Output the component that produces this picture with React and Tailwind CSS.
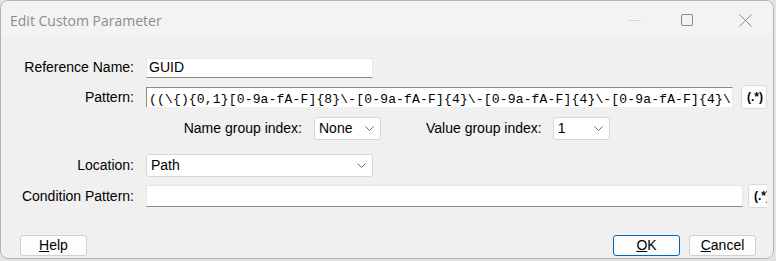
import React from "react";

const PATTERN =
  "((\\{){0,1}[0-9a-fA-F]{8}\\-[0-9a-fA-F]{4}\\-[0-9a-fA-F]{4}\\-[0-9a-fA-F]{4}\\-[0-9a-fA-F]{12}(\\}){0,1})";

function Chevron() {
  return (
    <svg width="9" height="5" viewBox="0 0 9 5" className="shrink-0">
      <path d="M0.5 0.5 L4.5 4.5 L8.5 0.5" fill="none" stroke="#6a6a6a" strokeWidth="1" />
    </svg>
  );
}

function Select({ value, width }) {
  return (
    <div
      className={`${width} h-[23px] flex items-center justify-between bg-white border border-[#d6d6d6] rounded-[3px] pl-[4px] pr-[6px] text-[14px] text-black`}
    >
      <span>{value}</span>
      <Chevron />
    </div>
  );
}

function Label({ children }) {
  return <div className="w-[133px] shrink-0 text-right text-[14px] text-black">{children}</div>;
}

function RegexButton({ text, className }) {
  return (
    <div
      className={`h-[24px] shrink-0 flex items-center bg-[#fdfdfd] border border-[#dadada] rounded-[3px] pl-[5px] text-[12px] font-bold text-black ${className}`}
    >
      {text}
    </div>
  );
}

function DlgButton({ children, primary }) {
  return (
    <div
      className={`w-[67px] h-[21px] flex items-center justify-center bg-[#fdfdfd] rounded-[3px] text-[14px] text-black ${
        primary ? "border-[1.5px] border-[#0067c0]" : "border border-[#d0d0d0]"
      }`}
    >
      {children}
    </div>
  );
}

export default function App() {
  return (
    <div
      className="w-[776px] h-[261px] bg-[#e4e4e4] overflow-hidden"
      style={{ fontFamily: '"Liberation Sans", Arial, sans-serif' }}
    >
      <div className="w-[774px] h-[259px] bg-[#f0f0f0] border border-[#b4b4b4] rounded-[8px] overflow-hidden flex flex-col">
        {/* Title bar */}
        <div className="h-[36px] shrink-0 bg-[#f3f3f3] flex items-center pl-[9px]">
          <div className="text-[14px] text-[#8c8c8c] pt-[2px]" style={{ fontFamily: '"Open Sans", sans-serif' }}>
            Edit Custom Parameter
          </div>
          <div className="ml-auto flex items-center pr-[21px] pt-[2px]">
            <div className="w-[12px] h-px bg-[#d4d4d4]" />
            <div className="w-[12px] h-[12px] border border-[#8a8a8a] rounded-[2px] ml-[40px]" />
            <svg width="13" height="13" viewBox="0 0 13 13" className="ml-[46px]">
              <path d="M0.5 0.5 L12.5 12.5 M12.5 0.5 L0.5 12.5" stroke="#8a8a8a" strokeWidth="1" />
            </svg>
          </div>
        </div>

        {/* Form */}
        <div className="w-[766px] overflow-hidden flex flex-col">
          {/* Reference Name */}
          <div className="mt-[20px] flex items-center gap-[12px]">
            <Label>Reference Name:</Label>
            <div className="w-[227px] h-[20px] bg-white border border-[#e6e6e6] border-b-[#8a8a8a] flex items-center pl-[2px] text-[14px] text-black">
              GUID
            </div>
          </div>

          {/* Pattern */}
          <div className="mt-[7px] flex items-center gap-[12px]">
            <Label>Pattern:</Label>
            <div className="w-[587px] h-[20px] shrink-0 bg-white border-t border-l border-[#8c8c8c] border-r border-r-[#e8e8e8] overflow-hidden">
              <div
                className="whitespace-nowrap text-[13px] leading-[16px] pt-[4px] pl-[2px] text-black tracking-[0.17px]"
                style={{ fontFamily: '"Liberation Mono", "Courier New", monospace' }}
              >
                {PATTERN}
              </div>
            </div>
            <RegexButton text="(.*)" className="w-[26px] ml-[-4px]" />
          </div>

          {/* Group indexes */}
          <div className="mt-[8px] flex items-center">
            <div className="w-[301px] shrink-0 text-right text-[14px] text-black">Name group index:</div>
            <div className="ml-[12px]">
              <Select value="None" width="w-[67px]" />
            </div>
            <div className="ml-[45px] text-[14px] text-black">Value group index:</div>
            <div className="ml-[11px]">
              <Select value="1" width="w-[57px]" />
            </div>
          </div>

          {/* Location */}
          <div className="mt-[14px] flex items-center gap-[12px]">
            <Label>Location:</Label>
            <Select value="Path" width="w-[227px]" />
          </div>

          {/* Condition Pattern */}
          <div className="mt-[7px] flex items-center gap-[12px]">
            <Label>Condition Pattern:</Label>
            <div className="w-[597px] h-[22px] shrink-0 bg-white border border-[#e6e6e6] border-b-[#8a8a8a]" />
            <RegexButton text="(.*)" className="w-[30px] ml-[-7px]" />
          </div>
        </div>

        {/* Buttons */}
        <div className="mt-[27px] flex items-center pl-[19px] pr-[17px]">
          <DlgButton>
            <span>
              <span className="underline">H</span>elp
            </span>
          </DlgButton>
          <div className="ml-auto flex gap-[9px]">
            <DlgButton primary>
              <span>
                <span className="underline">O</span>K
              </span>
            </DlgButton>
            <DlgButton>
              <span>
                <span className="underline">C</span>ancel
              </span>
            </DlgButton>
          </div>
        </div>
      </div>
    </div>
  );
}
